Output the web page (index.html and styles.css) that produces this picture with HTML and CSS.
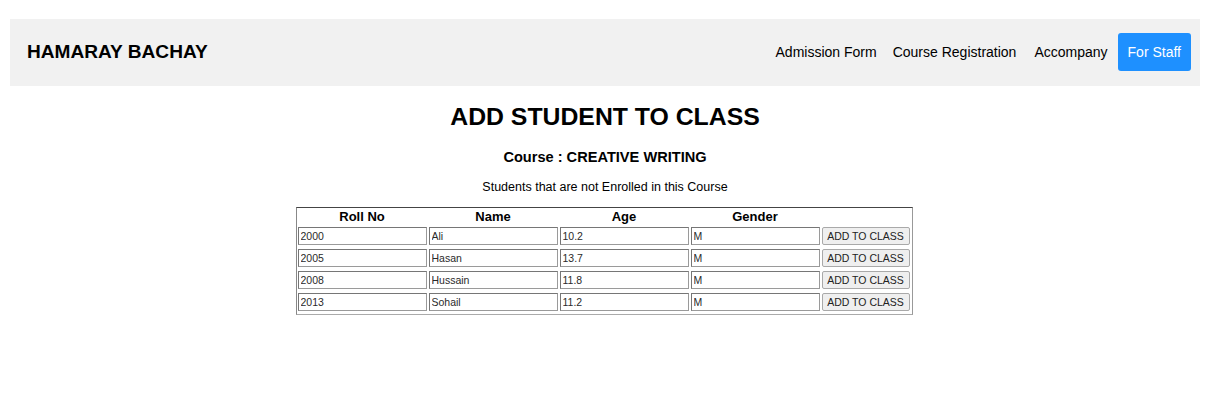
FILE: index.html
```html
<!DOCTYPE html>
<html lang="en">
<head>
<meta charset="utf-8">
<title>Add Student to Class</title>
<link rel="stylesheet" href="styles.css">
</head>
<body>
<div class="page">
  <header class="navbar">
    <div class="brand">HAMARAY BACHAY</div>
    <nav class="nav">
      <a class="nav-link" href="#">Admission Form</a>
      <a class="nav-link" href="#">Course Registration</a>
      <a class="nav-link nav-accompany" href="#">Accompany</a>
      <a class="nav-link nav-staff" href="#">For Staff</a>
    </nav>
  </header>
  <main class="content">
    <h1 class="title">ADD STUDENT TO CLASS</h1>
    <h3 class="course">Course : CREATIVE WRITING</h3>
    <p class="subtitle">Students that are not Enrolled in this Course</p>
    <table class="students">
      <thead>
        <tr>
          <th>Roll No</th>
          <th>Name</th>
          <th>Age</th>
          <th>Gender</th>
          <th class="act"></th>
        </tr>
      </thead>
      <tbody>
        <tr>
          <td><input class="field" type="text" value="2000"></td>
          <td><input class="field" type="text" value="Ali"></td>
          <td><input class="field" type="text" value="10.2"></td>
          <td><input class="field" type="text" value="M"></td>
          <td class="act"><button class="add-btn">ADD TO CLASS</button></td>
        </tr>
        <tr>
          <td><input class="field" type="text" value="2005"></td>
          <td><input class="field" type="text" value="Hasan"></td>
          <td><input class="field" type="text" value="13.7"></td>
          <td><input class="field" type="text" value="M"></td>
          <td class="act"><button class="add-btn">ADD TO CLASS</button></td>
        </tr>
        <tr>
          <td><input class="field" type="text" value="2008"></td>
          <td><input class="field" type="text" value="Hussain"></td>
          <td><input class="field" type="text" value="11.8"></td>
          <td><input class="field" type="text" value="M"></td>
          <td class="act"><button class="add-btn">ADD TO CLASS</button></td>
        </tr>
        <tr>
          <td><input class="field" type="text" value="2013"></td>
          <td><input class="field" type="text" value="Sohail"></td>
          <td><input class="field" type="text" value="11.2"></td>
          <td><input class="field" type="text" value="M"></td>
          <td class="act"><button class="add-btn">ADD TO CLASS</button></td>
        </tr>
      </tbody>
    </table>
  </main>
</div>
</body>
</html>
```
FILE: styles.css
```css
* { box-sizing: border-box; }

html, body {
  margin: 0;
  padding: 0;
  background: #ffffff;
  font-family: "Liberation Sans", Arial, sans-serif;
  color: #000;
}

.page {
  margin: 19px 20px 0 10px;
}

.navbar {
  display: flex;
  align-items: center;
  justify-content: space-between;
  height: 67px;
  background: #f1f1f1;
  padding: 0 9px 2px 17px;
}

.brand {
  font-size: 19.1px;
  font-weight: bold;
  color: #000;
}

.nav {
  display: flex;
  align-items: center;
}

.nav-link {
  font-size: 14px;
  color: #000;
  text-decoration: none;
  padding: 11px 8px;
  line-height: 16px;
}

.nav-accompany {
  margin-left: 2px;
}

.nav-staff {
  background: #1e90ff;
  color: #fff;
  border-radius: 3px;
  padding: 11px 10px;
  margin-left: 2px;
}

.content {
  display: flex;
  flex-direction: column;
  align-items: center;
}

.title {
  font-size: 24.8px;
  font-weight: bold;
  margin: 16px 0 0;
  line-height: 29px;
}

.course {
  font-size: 14.6px;
  font-weight: bold;
  margin: 18px 0 0;
  line-height: 17px;
}

.subtitle {
  font-size: 12.5px;
  margin: 14px 0 0;
  line-height: 14px;
}

.students {
  margin: 13px 2px 0 0;
  border-collapse: separate;
  border-spacing: 0;
  border: 1px solid;
  border-color: #444 #999 #aaa #888;
}

.students th {
  font-size: 13px;
  font-weight: bold;
  line-height: 15px;
  padding: 1px 1px 1px;
  text-align: center;
}

.students td {
  padding: 2px 1px;
}

.students tbody tr:last-child td {
  padding-bottom: 3px;
}

.students td.act {
  padding-right: 2px;
}

.field {
  display: block;
  width: 129px;
  height: 18px;
  margin: 0;
  padding: 0 2px;
  border: 1px solid;
  border-color: #767676 #9a9a9a #9a9a9a #767676;
  font-family: "Liberation Sans", Arial, sans-serif;
  font-size: 10.5px;
  color: #2a2a2a;
  background: #fff;
}

.add-btn {
  display: block;
  width: 88px;
  height: 18px;
  margin: 0;
  padding: 0;
  border: 1px solid #a9a9a9;
  border-radius: 2px;
  background: #efefef;
  font-family: "Liberation Sans", Arial, sans-serif;
  font-size: 10.5px;
  color: #222;
}
```
